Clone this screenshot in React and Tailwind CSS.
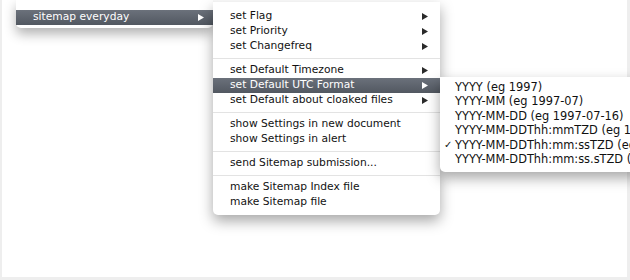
import React from "react";

const font = { fontFamily: '"DejaVu Sans", "Lucida Grande", sans-serif' };

function Arrow({ white }) {
  return (
    <svg width="6" height="7" viewBox="0 0 6 7" className="shrink-0">
      <path d="M0 0 L6 3.5 L0 7 Z" fill={white ? "#ffffff" : "#2a2a2a"} />
    </svg>
  );
}

function Item({ label, arrow, active }) {
  return (
    <div
      className={
        "flex h-[15px] items-center justify-between pl-[17px] pr-[12px] text-[10.7px] leading-none " +
        (active
          ? "bg-gradient-to-b from-[#6b717b] to-[#525861] text-white"
          : "text-[#111]")
      }
    >
      <span className="whitespace-nowrap">{label}</span>
      {arrow && <Arrow white={active} />}
    </div>
  );
}

function Sep() {
  return (
    <div className="flex h-[9px] items-center">
      <div className="h-px w-full bg-[#e3e3e3]" />
    </div>
  );
}

function SubItem({ label, checked }) {
  return (
    <div className="flex h-[14.5px] items-center text-[11.4px] leading-none text-[#111]">
      <span className="w-[15px] shrink-0 pl-[4px] text-[10px]">{checked ? "✓" : ""}</span>
      <span className="shrink-0 whitespace-nowrap">{label}</span>
    </div>
  );
}

export default function App() {
  return (
    <div className="relative h-[280px] w-[630px] overflow-hidden bg-[#eeeeee]" style={font}>
      <div className="ml-[2px] mr-[3px] h-[277px] bg-white" />

      {/* first menu */}
      <div className="absolute left-[16px] top-0 h-[28px] w-[197px] rounded-b-[5px] bg-white pt-[10px] shadow-[0_6px_12px_rgba(0,0,0,0.3)]">
        <div className="flex h-[15px] items-center justify-between bg-gradient-to-b from-[#6b717b] to-[#525861] pl-[17px] pr-[9px] text-[10.7px] leading-none text-white">
          <span>sitemap everyday</span>
          <Arrow white />
        </div>
      </div>

      {/* second menu */}
      <div className="absolute left-[213px] top-[2px] w-[227px] rounded-b-[5px] bg-white pb-[5px] pt-[7px] shadow-[0_6px_14px_rgba(0,0,0,0.35)]">
        <Item label="set Flag" arrow />
        <Item label="set Priority" arrow />
        <Item label="set Changefreq" arrow />
        <Sep />
        <Item label="set Default Timezone" arrow />
        <Item label="set Default UTC Format" arrow active />
        <Item label="set Default about cloaked files" arrow />
        <Sep />
        <Item label="show Settings in new document" />
        <Item label="show Settings in alert" />
        <Sep />
        <Item label="send Sitemap submission..." />
        <Sep />
        <Item label="make Sitemap Index file" />
        <Item label="make Sitemap file" />
      </div>

      {/* third menu */}
      <div className="absolute left-[440px] top-[77px] w-[200px] overflow-hidden rounded-bl-[5px] bg-white pb-[5px] pt-[3px] shadow-[0_6px_14px_rgba(0,0,0,0.35)]">
        <SubItem label="YYYY (eg 1997)" />
        <SubItem label="YYYY-MM (eg 1997-07)" />
        <SubItem label="YYYY-MM-DD (eg 1997-07-16)" />
        <SubItem label="YYYY-MM-DDThh:mmTZD (eg 1997-07-16T19:20+01:00)" />
        <SubItem label="YYYY-MM-DDThh:mm:ssTZD (eg 1997-07-16T19:20:30+01:00)" checked />
        <SubItem label="YYYY-MM-DDThh:mm:ss.sTZD (eg 1997-07-16T19:20:30.45+01:00)" />
      </div>
    </div>
  );
}
